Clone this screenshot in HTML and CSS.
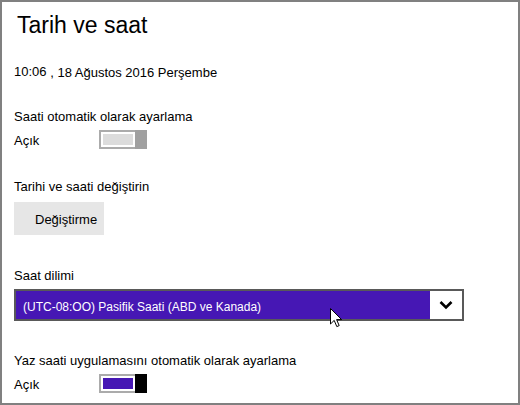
FILE: index.html
```html
<!DOCTYPE html>
<html lang="tr">
<head>
    <meta charset="UTF-8">
    <title>Tarih ve saat</title>
    <link rel="stylesheet" href="styles.css">
</head>
<body>

<div class="frame">
    <h1 class="title">Tarih ve saat</h1>

    <div class="date-line"><span class="clock">10:06</span> <span class="date">, 18 Ağustos 2016 Perşembe</span></div>

    <div class="label label-auto">Saati otomatik olarak ayarlama</div>
    <div class="toggle-row">
        <span class="state">Açık</span>
        <div class="toggle">
            <div class="track"><div class="fill"></div></div>
            <div class="thumb"></div>
        </div>
    </div>

    <div class="label label-change">Tarihi ve saati değiştirin</div>
    <button class="change-btn">Değiştirme</button>

    <div class="label label-zone">Saat dilimi</div>
    <div class="select">
        <div class="select-value">(UTC-08:OO) Pasifik Saati (ABD ve Kanada)</div>
        <div class="select-arrow">
            <svg width="14" height="10" viewBox="0 0 14 10">
                <path d="M1.5 2 L7 7.5 L12.5 2" fill="none" stroke="#000" stroke-width="2.6"/>
            </svg>
        </div>
        <svg class="cursor" width="14" height="21" viewBox="0 0 14 21">
            <path d="M0.5 0.5 L0.5 16 L4.2 12.4 L6.8 18.6 L9.2 17.6 L6.6 11.6 L11.6 11.6 Z" fill="#fff" stroke="#000" stroke-width="1"/>
        </svg>
    </div>

    <div class="label label-dst">Yaz saati uygulamasını otomatik olarak ayarlama</div>
    <div class="toggle-row">
        <span class="state">Açık</span>
        <div class="toggle on">
            <div class="track"><div class="fill"></div></div>
            <div class="thumb"></div>
        </div>
    </div>
</div>

</body>
</html>
```

FILE: styles.css
```css
body {
    margin: 0;
    font-family: "Liberation Sans", Arial, sans-serif;
    font-size: 13px;
    line-height: 16px;
    color: #000;
    background: #fff;
}
.frame {
    width: 520px;
    height: 405px;
    box-sizing: border-box;
    border: 2px solid #808080;
    padding: 8px 0 0 12px;
}
.title {
    margin: 0;
    font-size: 23px;
    font-weight: normal;
    line-height: 30px;
    padding-left: 3px;
}
.date-line {
    margin-top: 24px;
}
.date {
    position: relative;
    top: 1px;
}
.label-auto { margin-top: 29px; }
.label-change { margin-top: 30px; }
.label-zone { margin-top: 33px; }
.label-dst { margin-top: 32px; }

.toggle-row {
    display: flex;
    align-items: flex-start;
    margin-top: 5px;
}
.state {
    width: 85px;
    margin-top: 3px;
}
.toggle {
    display: flex;
    width: 50px;
    height: 19px;
}
.track {
    width: 36px;
    border: 2px solid #ababab;
    border-right: none;
    padding: 2px;
    box-sizing: border-box;
    background: #fff;
}
.fill {
    height: 100%;
    background: #dcdcdc;
}
.thumb {
    width: 12px;
    background: #a0a0a0;
}
.toggle.on .fill { background: #4617b4; }
.toggle.on .thumb { background: #000; }

.change-btn {
    display: block;
    margin-top: 7px;
    width: 90px;
    height: 33px;
    border: none;
    background: #e6e6e6;
    font: inherit;
    text-align: left;
    padding: 3px 0 0 21px;
    color: #000;
}

.select {
    position: relative;
    display: flex;
    margin-top: 5px;
    width: 450px;
    height: 32px;
    box-sizing: border-box;
    border: 2px solid #595959;
    background: #4617b4;
}
.select-value {
    flex: 1;
    color: #fff;
    font-size: 12px;
    padding: 8px 0 0 7px;
}
.select-arrow {
    width: 32px;
    background: #fff;
    display: flex;
    align-items: center;
    justify-content: center;
}
.cursor {
    position: absolute;
    left: 314px;
    top: 17px;
}
```
